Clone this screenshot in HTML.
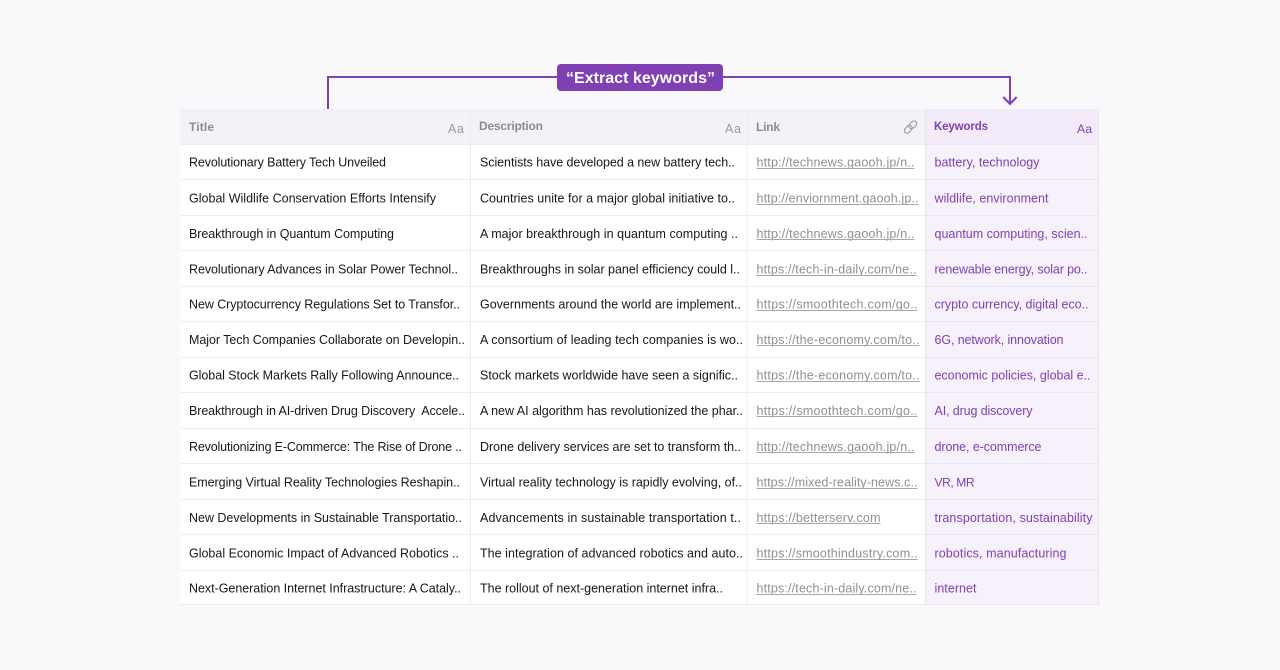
<!DOCTYPE html>
<html><head><meta charset="utf-8"><style>
html,body{margin:0;padding:0;background:#f9f9fb;width:1280px;height:670px;overflow:hidden}
svg{display:block}
text{font-family:"Liberation Sans",sans-serif;font-size:12.5px}
.a text{fill:#18181b}
.l text{fill:#8f8f97}
.k text{fill:#8040b4}
.h{font-weight:700;fill:#8b8b94;font-size:12px}
.s{fill:#9a9aa2;font-size:12.5px}
</style></head><body>
<svg width="1280" height="670" viewBox="0 0 1280 670" xmlns="http://www.w3.org/2000/svg">
<rect width="1280" height="670" fill="#f9f9fb"/>
<rect x="180" y="144" width="746" height="461" fill="#ffffff"/>
<rect x="180" y="109" width="746" height="35" fill="#f3f3f7"/>
<rect x="926" y="144" width="173" height="461" fill="#f7f1fc"/>
<rect x="926" y="109" width="173" height="35" fill="#f3eafa"/>
<g stroke="#ededf1" stroke-width="1">
<path d="M180 144.500H926M180 179.500H926M180 215.500H926M180 250.500H926M180 286.500H926M180 321.500H926M180 357.500H926M180 392.500H926M180 428.500H926M180 463.500H926M180 499.500H926M180 534.500H926M180 570.500H926M180 604.500H926"/>
<path d="M470.500 109V605M747 109V605"/>
</g>
<g stroke="#ebe5f2" stroke-width="1">
<path d="M926 144.500H1099M926 179.500H1099M926 215.500H1099M926 250.500H1099M926 286.500H1099M926 321.500H1099M926 357.500H1099M926 392.500H1099M926 428.500H1099M926 463.500H1099M926 499.500H1099M926 534.500H1099M926 570.500H1099M926 604.500H1099"/>
<path d="M925.500 109V605M1098.500 109V605"/>
</g>
<path d="M328 109V77H1010V103" fill="none" stroke="#8040b4" stroke-width="2"/>
<path d="M1003.300 97L1010 104L1016.700 97" fill="none" stroke="#8040b4" stroke-width="2"/>
<rect x="557" y="64" width="166" height="27" rx="4" fill="#8040b4"/>
<text x="566" y="83" textLength="149" lengthAdjust="spacing" style="font-size:16px;font-weight:700;fill:#fff">“Extract keywords”</text>

<text class="h" x="189" y="131" textLength="25" lengthAdjust="spacing">Title</text>
<text class="s" x="448" y="133" textLength="16" lengthAdjust="spacing">Aa</text>
<text class="h" x="479" y="130" textLength="64" lengthAdjust="spacing">Description</text>
<text class="s" x="725" y="133" textLength="16" lengthAdjust="spacing">Aa</text>
<text class="h" x="756" y="131" textLength="24" lengthAdjust="spacing">Link</text>
<g transform="rotate(-45 910.500 127)" fill="none" stroke="#9a9aa2" stroke-width="1.100">
<rect x="903" y="124.300" width="8.800" height="5.400" rx="2.700"/>
<rect x="909.200" y="124.300" width="8.800" height="5.400" rx="2.700"/>
</g>
<text class="h" x="934" y="130" textLength="54" lengthAdjust="spacing" style="fill:#8040b4;font-size:11.5px">Keywords</text>
<text class="s" x="1077" y="133" textLength="15" lengthAdjust="spacing" style="fill:#8040b4;font-size:12px">Aa</text>

<g class="a">
<text x="189" y="166.500" textLength="197" lengthAdjust="spacing">Revolutionary Battery Tech Unveiled</text>
<text x="189" y="202.500" textLength="247" lengthAdjust="spacing">Global Wildlife Conservation Efforts Intensify</text>
<text x="189" y="238" textLength="205" lengthAdjust="spacing">Breakthrough in Quantum Computing</text>
<text x="189" y="273.500" textLength="269" lengthAdjust="spacing">Revolutionary Advances in Solar Power Technol..</text>
<text x="189" y="308.500" textLength="271" lengthAdjust="spacing">New Cryptocurrency Regulations Set to Transfor..</text>
<text x="189" y="344" textLength="276" lengthAdjust="spacing">Major Tech Companies Collaborate on Developin..</text>
<text x="189" y="379.500" textLength="270" lengthAdjust="spacing">Global Stock Markets Rally Following Announce..</text>
<text x="189" y="415" textLength="276" lengthAdjust="spacing" xml:space="preserve">Breakthrough in AI-driven Drug Discovery  Accele..</text>
<text x="189" y="451" textLength="273" lengthAdjust="spacing">Revolutionizing E-Commerce: The Rise of Drone ..</text>
<text x="189" y="486.500" textLength="271" lengthAdjust="spacing">Emerging Virtual Reality Technologies Reshapin..</text>
<text x="189" y="522" textLength="273" lengthAdjust="spacing">New Developments in Sustainable Transportatio..</text>
<text x="189" y="557.500" textLength="270" lengthAdjust="spacing">Global Economic Impact of Advanced Robotics ..</text>
<text x="189" y="592.500" textLength="272" lengthAdjust="spacing">Next-Generation Internet Infrastructure: A Cataly..</text>

<text x="480" y="166.500" textLength="255" lengthAdjust="spacing">Scientists have developed a new battery tech..</text>
<text x="480" y="202.500" textLength="255" lengthAdjust="spacing">Countries unite for a major global initiative to..</text>
<text x="480" y="238" textLength="258" lengthAdjust="spacing">A major breakthrough in quantum computing ..</text>
<text x="480" y="273.500" textLength="260" lengthAdjust="spacing">Breakthroughs in solar panel efficiency could l..</text>
<text x="480" y="308.500" textLength="261" lengthAdjust="spacing">Governments around the world are implement..</text>
<text x="480" y="344" textLength="263" lengthAdjust="spacing">A consortium of leading tech companies is wo..</text>
<text x="480" y="379.500" textLength="258" lengthAdjust="spacing">Stock markets worldwide have seen a signific..</text>
<text x="480" y="415" textLength="263" lengthAdjust="spacing">A new AI algorithm has revolutionized the phar..</text>
<text x="480" y="451" textLength="261" lengthAdjust="spacing">Drone delivery services are set to transform th..</text>
<text x="480" y="486.500" textLength="262" lengthAdjust="spacing">Virtual reality technology is rapidly evolving, of..</text>
<text x="480" y="522" textLength="261" lengthAdjust="spacing">Advancements in sustainable transportation t..</text>
<text x="480" y="557.500" textLength="263" lengthAdjust="spacing">The integration of advanced robotics and auto..</text>
<text x="480" y="592.500" textLength="243" lengthAdjust="spacing">The rollout of next-generation internet infra..</text>
</g>

<g class="l">
<text x="756.500" y="166.500" textLength="158" lengthAdjust="spacing">http://technews.gaooh.jp/n..</text>
<text x="756.500" y="202.500" textLength="162" lengthAdjust="spacing">http://enviornment.gaooh.jp..</text>
<text x="756.500" y="238" textLength="158" lengthAdjust="spacing">http://technews.gaooh.jp/n..</text>
<text x="756.500" y="273.500" textLength="160" lengthAdjust="spacing">https://tech-in-daily.com/ne..</text>
<text x="756.500" y="308.500" textLength="161" lengthAdjust="spacing">https://smoothtech.com/go..</text>
<text x="756.500" y="344" textLength="163" lengthAdjust="spacing">https://the-economy.com/to..</text>
<text x="756.500" y="379.500" textLength="163" lengthAdjust="spacing">https://the-economy.com/to..</text>
<text x="756.500" y="415" textLength="161" lengthAdjust="spacing">https://smoothtech.com/go..</text>
<text x="756.500" y="451" textLength="158" lengthAdjust="spacing">http://technews.gaooh.jp/n..</text>
<text x="756.500" y="486.500" textLength="161" lengthAdjust="spacing">https://mixed-reality-news.c..</text>
<text x="756.500" y="522" textLength="124" lengthAdjust="spacing">https://betterserv.com</text>
<text x="756.500" y="557.500" textLength="161" lengthAdjust="spacing">https://smoothindustry.com..</text>
<text x="756.500" y="592.500" textLength="160" lengthAdjust="spacing">https://tech-in-daily.com/ne..</text>
</g>
<g stroke="#a6a6ae" stroke-width="1" fill="none">
<path d="M756.500 168.500H914.500M756.500 204.500H918.500M756.500 239.500H914.500M756.500 275.500H916.500M756.500 310.500H917.500M756.500 345.500H919.500M756.500 381.500H919.500M756.500 416.500H917.500M756.500 452.500H914.500M756.500 488.500H917.500M756.500 523.500H880.500M756.500 559.500H917.500M756.500 594.500H916.500"/>
</g>

<g class="k">
<text x="934.500" y="166.500" textLength="105" lengthAdjust="spacing">battery, technology</text>
<text x="934.500" y="202.500" textLength="114" lengthAdjust="spacing">wildlife, environment</text>
<text x="934.500" y="238" textLength="153" lengthAdjust="spacing">quantum computing, scien..</text>
<text x="934.500" y="273.500" textLength="153" lengthAdjust="spacing">renewable energy, solar po..</text>
<text x="934.500" y="308.500" textLength="154" lengthAdjust="spacing">crypto currency, digital eco..</text>
<text x="934.500" y="344" textLength="129" lengthAdjust="spacing">6G, network, innovation</text>
<text x="934.500" y="379.500" textLength="156" lengthAdjust="spacing">economic policies, global e..</text>
<text x="934.500" y="415" textLength="98" lengthAdjust="spacing">AI, drug discovery</text>
<text x="934.500" y="451" textLength="107" lengthAdjust="spacing">drone, e-commerce</text>
<text x="934.500" y="486.500" textLength="40" lengthAdjust="spacing" style="font-size:12px">VR, MR</text>
<text x="934.500" y="522" textLength="158" lengthAdjust="spacing">transportation, sustainability</text>
<text x="934.500" y="557.500" textLength="132" lengthAdjust="spacing">robotics, manufacturing</text>
<text x="934.500" y="592.500" textLength="42" lengthAdjust="spacing">internet</text>
</g>
</svg>
</body></html>
